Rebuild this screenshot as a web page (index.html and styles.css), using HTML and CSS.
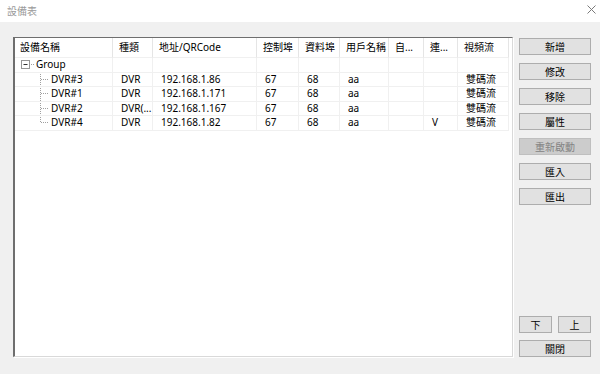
FILE: index.html
```html
<!DOCTYPE html>
<html lang="zh-Hant">
<head>
  <meta charset="UTF-8">
  <title>設備表</title>
  <link rel="stylesheet" href="styles.css">
</head>
<body>
  <div class="titlebar">
    <span class="title">設備表</span>
    <svg class="close" viewBox="0 0 9 9" width="9" height="9">
      <path d="M0.5 0.5 L8.5 8.5 M8.5 0.5 L0.5 8.5" stroke="#7a7a7a" stroke-width="1" fill="none"/>
    </svg>
  </div>

  <div class="dialog">
    <div class="listbox">
      <table class="devices">
        <colgroup>
          <col style="width:98px"><col style="width:40px"><col style="width:104px">
          <col style="width:42px"><col style="width:41px"><col style="width:49px">
          <col style="width:35px"><col style="width:34px"><col style="width:51px">
        </colgroup>
        <thead>
          <tr>
            <th>設備名稱</th><th>種類</th><th>地址/QRCode</th><th>控制埠</th><th>資料埠</th>
            <th>用戶名稱</th><th>自...</th><th>連...</th><th>視頻流</th>
          </tr>
        </thead>
        <tbody>
          <tr>
            <td class="tree">
              <svg class="node" viewBox="0 0 14 9" width="14" height="9">
                <rect x="0.5" y="0.5" width="8" height="8" fill="#fff" stroke="#969696"/>
                <path d="M2.5 4.5 H6.5" stroke="#333" stroke-width="1"/>
                <path d="M10 4.5 H14" stroke="#a0a0a0" stroke-dasharray="1 1"/>
              </svg>Group
            </td>
            <td></td><td></td><td></td><td></td><td></td><td></td><td></td><td></td>
          </tr>
          <tr>
            <td class="tree child">
              <svg class="guide" viewBox="0 0 9 13" width="9" height="13">
                <path d="M0.5 -1 V15 M1 6.5 H8" stroke="#a0a0a0" stroke-dasharray="1 1"/>
              </svg>DVR#3
            </td>
            <td>DVR</td><td>192.168.1.86</td><td>67</td><td>68</td><td>aa</td><td></td><td></td><td>雙碼流</td>
          </tr>
          <tr>
            <td class="tree child">
              <svg class="guide" viewBox="0 0 9 13" width="9" height="13">
                <path d="M0.5 -1 V15 M1 6.5 H8" stroke="#a0a0a0" stroke-dasharray="1 1"/>
              </svg>DVR#1
            </td>
            <td>DVR</td><td>192.168.1.171</td><td>67</td><td>68</td><td>aa</td><td></td><td></td><td>雙碼流</td>
          </tr>
          <tr>
            <td class="tree child">
              <svg class="guide" viewBox="0 0 9 13" width="9" height="13">
                <path d="M0.5 -1 V15 M1 6.5 H8" stroke="#a0a0a0" stroke-dasharray="1 1"/>
              </svg>DVR#2
            </td>
            <td>DVR(...</td><td>192.168.1.167</td><td>67</td><td>68</td><td>aa</td><td></td><td></td><td>雙碼流</td>
          </tr>
          <tr>
            <td class="tree child">
              <svg class="guide" viewBox="0 0 9 13" width="9" height="13">
                <path d="M0.5 -1 V7 M1 6.5 H8" stroke="#a0a0a0" stroke-dasharray="1 1"/>
              </svg>DVR#4
            </td>
            <td>DVR</td><td>192.168.1.82</td><td>67</td><td>68</td><td>aa</td><td></td><td>V</td><td>雙碼流</td>
          </tr>
        </tbody>
      </table>
    </div>

    <div class="actions">
      <button class="btn">新增</button>
      <button class="btn">修改</button>
      <button class="btn">移除</button>
      <button class="btn">屬性</button>
      <button class="btn" disabled>重新啟動</button>
      <button class="btn">匯入</button>
      <button class="btn">匯出</button>

      <div class="bottom">
        <div class="order">
          <button class="btn small">下</button>
          <button class="btn small">上</button>
        </div>
        <button class="btn">關閉</button>
      </div>
    </div>
  </div>
</body>
</html>
```

FILE: styles.css
```css
body {
  margin: 0;
  width: 600px;
  height: 374px;
  background: #f0f0f0;
  font-family: 'Noto Sans', 'Noto Sans CJK TC', sans-serif;
  font-size: 10px;
  color: #000;
  overflow: hidden;
}

.titlebar {
  height: 22px;
  background: #fff;
  display: flex;
  align-items: center;
  justify-content: space-between;
  padding: 0 4px 0 7px;
}

.title {
  color: #9a9a9a;
  font-size: 10px;
  margin-top: -2px;
}

.close {
  margin-top: -3px;
}

.dialog {
  display: flex;
  gap: 6px;
  padding: 15px 0 0 13px;
}

.listbox {
  width: 500px;
  height: 320px;
  box-sizing: border-box;
  background: #fff;
  border-style: solid;
  border-width: 1px 1px 1px 2px;
  border-color: #6e6e6e #d9d9d9 #d9d9d9 #6e6e6e;
  box-shadow: 1px 1px 0 #fff;
}

.devices {
  table-layout: fixed;
  border-collapse: separate;
  border-spacing: 0;
  width: 494px;
}

.devices th,
.devices td {
  padding: 0 0 0 8px;
  white-space: nowrap;
  overflow: hidden;
  text-align: left;
  font-weight: normal;
  line-height: 13px;
}

.devices th {
  height: 19px;
  padding-left: 6px;
  border-right: 1px solid #e5e5e5;
  border-bottom: 1px solid #f0f0f0;
}

.devices th:first-child {
  padding-left: 5px;
}

.devices td {
  height: 13.5px;
  border-right: 1px solid #f0f0f0;
  border-bottom: 1px solid #f0f0f0;
}

.devices td.tree {
  padding-left: 6px;
}

.node {
  vertical-align: -1px;
  margin-right: 1px;
}

.devices td.child {
  padding-left: 25px;
}

.guide {
  vertical-align: top;
  margin: 0 2px 0 0;
  overflow: visible;
}

.actions {
  width: 72px;
  height: 320px;
  display: flex;
  flex-direction: column;
  gap: 8px;
  padding-top: 1px;
  box-sizing: border-box;
}

.btn {
  height: 17px;
  width: 72px;
  padding: 0;
  background: #e1e1e1;
  border: 1px solid #adadad;
  font-family: inherit;
  font-size: 10px;
  color: #000;
  line-height: 14px;
}

.btn:disabled {
  background: #cccccc;
  border-color: #bfbfbf;
  color: #838383;
}

.bottom {
  margin-top: auto;
  display: flex;
  flex-direction: column;
  gap: 7px;
}

.order {
  display: flex;
  justify-content: space-between;
}

.btn.small {
  width: 33px;
}
```
